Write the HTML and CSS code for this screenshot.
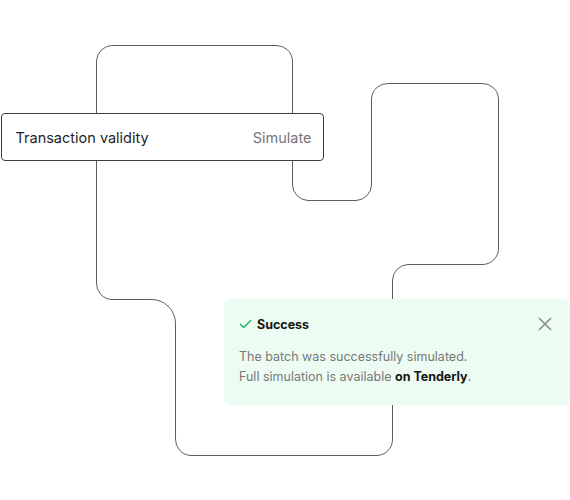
FILE: index.html
```html
<!DOCTYPE html>
<html lang="en">
<head>
    <meta charset="UTF-8">
    <meta name="viewport" content="width=device-width, initial-scale=1.0">
    <title>Transaction validity</title>
    <link rel="stylesheet" href="styles.css">
</head>
<body>
    <div class="stage">
        <svg class="track" width="570" height="500" viewBox="0 0 570 500">
            <path d="M112 45.5 H276 A16 16 0 0 1 292.5 61 V185 A16 16 0 0 0 308 200.5 H356 A16 16 0 0 0 371.5 185 V99 A16 16 0 0 1 388 83.5 H482 A16 16 0 0 1 498.5 99 V248 A16 16 0 0 1 482 264.5 H408 A16 16 0 0 0 392.5 280 V439 A16 16 0 0 1 376 455.5 H191 A16 16 0 0 1 175.5 439 V323 A24 24 0 0 0 151 299.5 H112 A16 16 0 0 1 96.5 283 V61 A16 16 0 0 1 112 45.5 Z" />
        </svg>

        <div class="validity">
            <span class="validity-title">Transaction validity</span>
            <span class="validity-action">Simulate</span>
        </div>

        <div class="toast">
            <div class="toast-head">
                <svg class="toast-check" width="13" height="10" viewBox="0 0 13 10">
                    <path d="M1 5 L4.6 8.6 L12 1.2" />
                </svg>
                <span class="toast-title">Success</span>
                <svg class="toast-close" width="14" height="14" viewBox="0 0 14 14">
                    <path d="M1 1 L13 13 M13 1 L1 13" />
                </svg>
            </div>
            <p class="toast-text">
                The batch was successfully simulated.<br>
                Full simulation is available <b>on Tenderly</b>.
            </p>
        </div>
    </div>
</body>
</html>
```

FILE: styles.css
```css
body {
    margin: 0;
    background-color: #fff;
    font-family: Inter, "Liberation Sans", sans-serif;
}
.stage {
    position: relative;
    width: 570px;
    height: 500px;
    overflow: hidden;
}
.track {
    position: absolute;
    left: 0;
    top: 0;
}
.track path {
    fill: none;
    stroke: #5e5e5e;
    stroke-width: 1;
}
.validity {
    position: relative;
    display: flex;
    justify-content: space-between;
    align-items: center;
    box-sizing: border-box;
    width: 323px;
    height: 48px;
    margin: 113px 0 0 0.5px;
    padding: 1px 11px 0 14px;
    background-color: #fff;
    border: 1px solid #3d3d3d;
    border-radius: 4px;
    font-size: 14.5px;
}
.validity-title {
    color: #1f1f1f;
}
.validity-action {
    color: #767676;
}
.toast {
    position: relative;
    box-sizing: border-box;
    width: 346px;
    height: 106px;
    margin: 138px 0 0 224px;
    padding: 17px 18px 0 15px;
    background-color: #edfcf2;
    border-radius: 6px;
}
.toast-head {
    display: flex;
    align-items: center;
    height: 16px;
}
.toast-check {
    margin-right: 5px;
}
.toast-check path {
    fill: none;
    stroke: #25b065;
    stroke-width: 1.4;
}
.toast-title {
    flex: 1;
    font-size: 12.5px;
    font-weight: 700;
    color: #151515;
}
.toast-close path {
    fill: none;
    stroke: #8a8f8c;
    stroke-width: 1.6;
}
.toast-text {
    margin: 15px 0 0 0;
    font-size: 12.5px;
    line-height: 19.5px;
    color: #777;
}
.toast-text b {
    color: #151515;
}
```
